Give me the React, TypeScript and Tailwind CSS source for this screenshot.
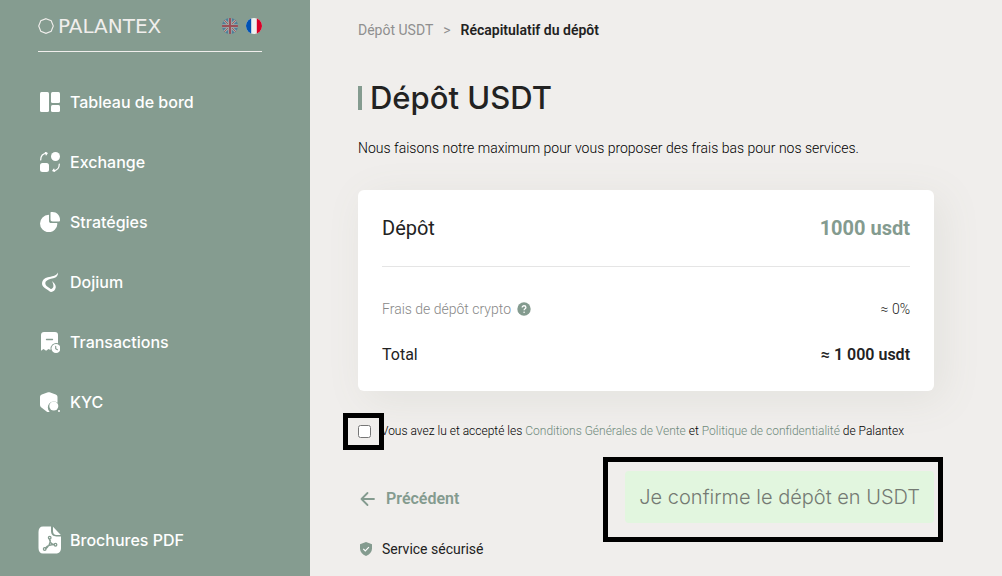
import { ReactNode } from "react";

interface NavItem {
  label: string;
  icon: ReactNode;
}

const navItems: NavItem[] = [
  {
    label: "Tableau de bord",
    icon: (
      <svg viewBox="0 0 20 20" className="h-5 w-5" fill="currentColor" aria-hidden="true">
        <rect x="0" y="0" width="9" height="20" rx="1.5" />
        <rect x="11" y="0" width="9" height="11" rx="1.5" />
        <rect x="11" y="13" width="9" height="7" rx="1.5" />
      </svg>
    ),
  },
  {
    label: "Exchange",
    icon: (
      <svg viewBox="0 0 20 20" className="h-5 w-5" fill="currentColor" aria-hidden="true">
        <circle cx="15.5" cy="4.5" r="4.5" />
        <rect x="0" y="11" width="9" height="9" rx="2.5" />
        <path
          d="M.7 8C.7 4.300 3 1.500 7 1.200M5.300.5 7.200 1.200 6 2.800M19.300 12c0 3.700-2.300 6.500-6.300 6.800M14.700 19.500l-1.900-.7 1.200-1.600"
          fill="none"
          stroke="currentColor"
          strokeWidth="1.2"
          strokeLinecap="round"
          strokeLinejoin="round"
        />
      </svg>
    ),
  },
  {
    label: "Stratégies",
    icon: (
      <svg viewBox="0 0 20 20" className="h-5 w-5" fill="currentColor" aria-hidden="true">
        <path d="M8.600 2.800c.3 0 .4.2.4.5v5.700c0 1.400.8 2.100 2.100 2.100h5.700c.4 0 .6.200.6.600A8.700 8.700 0 1 1 8.600 2.800Z" />
        <path d="M11.300 0h1.200C16.700 0 20 3.500 20 8c0 1-.5 1.500-1.500 1.500h-5.800c-1.500 0-2.200-.8-2.200-2.200V1c0-.6.200-1 .8-1Z" />
      </svg>
    ),
  },
  {
    label: "Dojium",
    icon: (
      <svg viewBox="0 0 20 20" className="h-5 w-5" fill="currentColor" aria-hidden="true">
        <path d="M18 .5c.2 3-1.400 5-4.700 5.800-3.300.8-6.300 1.500-7.500 3.300-1.300 2.200.2 4.400 2.800 5.900 1.200.8 2 1.500 2.600 1.500.8 0 1.600-.8 2.100-1.900.5-1.800-.2-4.300-1.500-6.200 2.500 1.700 4.200 4.300 4 6.400-.5 2.900-2.500 4.600-4.600 4.600-1.600 0-2.500-1.300-4.200-2.400C3.600 15.700 1.800 13.800 2 11c.2-3 2.600-5 5.800-5.800C11.500 4.300 16 4.500 18 .5Z" />
      </svg>
    ),
  },
  {
    label: "Transactions",
    icon: (
      <svg viewBox="0 0 20 21" className="h-[21px] w-5" aria-hidden="true">
        <path
          d="M4 0h11c2 0 3 1.200 3 3v8.300a5.800 5.800 0 0 0-7.500 6.700L8.500 17l-2.400 1.800L3.500 17 1 18.800V3C1 1.200 2.200 0 4 0Z"
          fill="currentColor"
        />
        <path d="M6.500 7.500h6" stroke="#859c90" strokeWidth="1.300" strokeLinecap="round" />
        <circle cx="16" cy="16.500" r="4.500" fill="currentColor" />
        <path d="M15.700 14.300v2.400l1.700 1" fill="none" stroke="#859c90" strokeWidth="1.100" strokeLinecap="round" />
      </svg>
    ),
  },
  {
    label: "KYC",
    icon: (
      <svg viewBox="0 0 20 20" className="h-5 w-5" fill="currentColor" aria-hidden="true">
        <path d="m7.300.5-5.500 2.100C.6 3.100 0 4 0 5.200v7.500c0 1.200.5 2.100 1.400 2.800l5.200 3.900c1 .7 2 .8 3 .3a6 6 0 0 1 7.900-9V5.200c0-1.200-.6-2.100-1.800-2.600L10.300.5c-1-.4-2-.4-3 0Z" />
        <circle cx="13.800" cy="14" r="4.500" />
        <circle cx="19" cy="19" r="1" />
      </svg>
    ),
  },
];

function PdfIcon() {
  return (
    <svg viewBox="0 0 24 28" className="h-7 w-6 shrink-0" aria-hidden="true">
      <path d="M5 .5h8v4.300C13 8.600 15 10.500 18.500 10.500H23V22c0 3.300-1.800 5.500-5 5.500H5C2 27.500.5 25.500.5 22V6C.5 2.500 2 .5 5 .5Z" fill="currentColor" />
      <path d="M15 .8 22.800 9h-4.300C16.200 9 15 7.500 15 5V.8Z" fill="currentColor" />
      <g fill="none" stroke="#859c90" strokeWidth="1.300" strokeLinejoin="round">
        <path d="M11.500 12.500c0 3.500 1.200 5.500 5 6.500M12.300 14c0 3.500-1.800 6.800-5 9M7.500 22c2.500-2.800 5.500-3.500 9-3.500" />
        <circle cx="11.700" cy="11.700" r="1.300" />
        <circle cx="17.500" cy="18.700" r="1.300" />
        <circle cx="6.700" cy="23" r="1.300" />
      </g>
    </svg>
  );
}

function Logo() {
  return (
    <a href="#" className="flex items-center gap-1 text-[#f0eeec]">
      <svg viewBox="0 0 16 16" className="h-4 w-4" fill="none" stroke="currentColor" aria-hidden="true">
        <path d="m8 .700 5.200 2L15.300 8l-2.100 5.300-5.200 2-5.200-2L.7 8l2.100-5.300Z" strokeWidth="1.100" />
      </svg>
      <span className="font-[DejaVu_Sans,sans-serif] text-xl leading-5">PALANTEX</span>
    </a>
  );
}

function LanguageSwitch() {
  return (
    <div className="flex gap-2">
      <button type="button" aria-label="English">
        <svg viewBox="0 0 16 16" className="h-4 w-4 overflow-hidden rounded-full">
          <rect width="16" height="16" fill="#4f7f99" />
          <path d="m0 0 16 16M16 0 0 16" stroke="#a3a9a5" strokeWidth="2.500" />
          <path d="m0 0 16 16M16 0 0 16" stroke="#995d66" strokeWidth="1" />
          <path d="M8 0v16M0 8h16" stroke="#a3a9a5" strokeWidth="3.600" />
          <path d="M8 0v16M0 8h16" stroke="#995058" strokeWidth="2" />
        </svg>
      </button>
      <button type="button" aria-label="Français">
        <svg viewBox="0 0 16 16" className="h-4 w-4 overflow-hidden rounded-full">
          <rect width="16" height="16" fill="#f0f0f0" />
          <rect width="5.200" height="16" fill="#0052b4" />
          <rect x="10.800" width="5.200" height="16" fill="#d80027" />
        </svg>
      </button>
    </div>
  );
}

function Sidebar() {
  return (
    <aside className="flex w-[310px] shrink-0 flex-col bg-[#859c90] pt-4 pr-12 pb-[22px] pl-[38px] font-[Inter,sans-serif] text-white">
      <div className="flex items-center justify-between border-b border-[#f0eeec] pb-[15px]">
        <Logo />
        <LanguageSwitch />
      </div>
      <nav className="mt-[38px] flex flex-col gap-9">
        {navItems.map((item) => (
          <a key={item.label} href="#" className="flex h-6 items-center gap-2.5 text-base font-medium">
            <span className="flex w-[22px] justify-end">{item.icon}</span>
            {item.label}
          </a>
        ))}
      </nav>
      <a href="#" className="mt-auto flex items-center gap-2 text-base font-medium">
        <PdfIcon />
        Brochures PDF
      </a>
    </aside>
  );
}

function DepositCard() {
  return (
    <section className="mt-8 rounded-md bg-white p-6 shadow-[8px_8px_40px_rgba(120,125,100,0.10)]">
      <div className="flex items-center justify-between border-b border-[#e5e5e5] pb-6 text-xl leading-7">
        <h2>Dépôt</h2>
        <span className="font-bold text-[#849b8f]">1000 usdt</span>
      </div>
      <div className="mt-8 flex items-center justify-between text-sm leading-5">
        <span className="flex items-center gap-1.5 font-light text-[#888]">
          Frais de dépôt crypto
          <button type="button" aria-label="Aide sur les frais">
            <svg viewBox="0 0 14 14" className="h-3.5 w-3.5" fill="none" aria-hidden="true">
              <circle cx="7" cy="7" r="6.700" fill="#849b8f" />
              <path d="M5.200 5.500c0-2.400 3.700-2.300 3.700 0 0 1.300-1.800 1.300-1.800 2.700" stroke="white" strokeWidth="1.300" />
              <circle cx="7.100" cy="10.200" r=".8" fill="white" />
            </svg>
          </button>
        </span>
        <span className="font-light">≈ 0%</span>
      </div>
      <div className="mt-6 flex items-center justify-between text-base leading-6">
        <span>Total</span>
        <span className="font-semibold">≈ 1 000 usdt</span>
      </div>
    </section>
  );
}

export default function App() {
  return (
    <div className="flex min-h-screen bg-[#f0eeec] font-[Roboto,sans-serif] text-[#222]">
      <Sidebar />
      <main className="min-w-0 flex-1 px-12 pt-5 pb-4">
        <div className="max-w-xl">
          <nav aria-label="Fil d'Ariane" className="flex gap-2.5 text-sm leading-5">
            <a href="#" className="text-[#8f8f8f]">
              Dépôt USDT
            </a>
            <span className="text-[#8f8f8f]">&gt;</span>
            <span className="font-semibold">Récapitulatif du dépôt</span>
          </nav>

          <h1 className="mt-10 flex items-center gap-2 font-[Inter,sans-serif] text-[31px] leading-9 font-medium">
            <span className="h-6 w-1 bg-[#849b8f]" />
            Dépôt USDT
          </h1>
          <p className="mt-[22px] text-sm leading-5 font-light text-black">
            Nous faisons notre maximum pour vous proposer des frais bas pour nos services.
          </p>

          <DepositCard />

          <div className="mt-8 flex items-center gap-2.5 text-xs leading-4 font-light text-black">
            <span className="relative flex">
              <input
                id="conditions"
                type="checkbox"
                className="h-[13px] w-[13px]"
              />
              <span className="pointer-events-none absolute -inset-y-3 -right-[13px] -left-[15px] border-5 border-black" />
            </span>
            <label htmlFor="conditions">
              Vous avez lu et accepté les{" "}
              <a href="#" className="text-[#6f8a7c]">
                Conditions Générales de Vente
              </a>{" "}
              et{" "}
              <a href="#" className="text-[#6f8a7c]">
                Politique de confidentialité
              </a>{" "}
              de Palantex
            </label>
          </div>

          <div className="mt-8 flex items-start justify-between">
            <div className="pt-4">
              <button type="button" className="flex items-center gap-2.5 text-base leading-6 font-semibold text-[#849b8f]">
                <svg viewBox="0 0 18 18" className="h-[18px] w-[18px]" fill="none" aria-hidden="true">
                  <path d="M9.500 3 3.500 9l6 6M3.500 9H16" stroke="currentColor" strokeWidth="1.800" strokeLinecap="round" strokeLinejoin="round" />
                </svg>
                Précédent
              </button>
              <p className="mt-7 flex items-center gap-2 text-sm leading-5">
                <svg viewBox="0 0 16 16" className="h-4 w-4" fill="none" aria-hidden="true">
                  <path d="m8 1 6 2.200v4.600c0 3.300-2.500 5.700-6 7.200-3.500-1.500-6-3.900-6-7.200V3.200Z" fill="#849b8f" />
                  <path d="m5.300 7.800 2 2 3.600-3.600" stroke="white" strokeWidth="1.200" />
                </svg>
                Service sécurisé
              </p>
            </div>
            <div className="relative">
              <button
                type="button"
                className="h-[52px] rounded bg-[#e2f6df] px-3.5 font-[Inter,sans-serif] text-xl font-light text-[#747a73]"
              >
                Je confirme le dépôt en USDT
              </button>
              <span className="pointer-events-none absolute -top-3.5 -right-[9px] -bottom-[19px] -left-[22px] border-5 border-black" />
            </div>
          </div>
        </div>
      </main>
    </div>
  );
}
